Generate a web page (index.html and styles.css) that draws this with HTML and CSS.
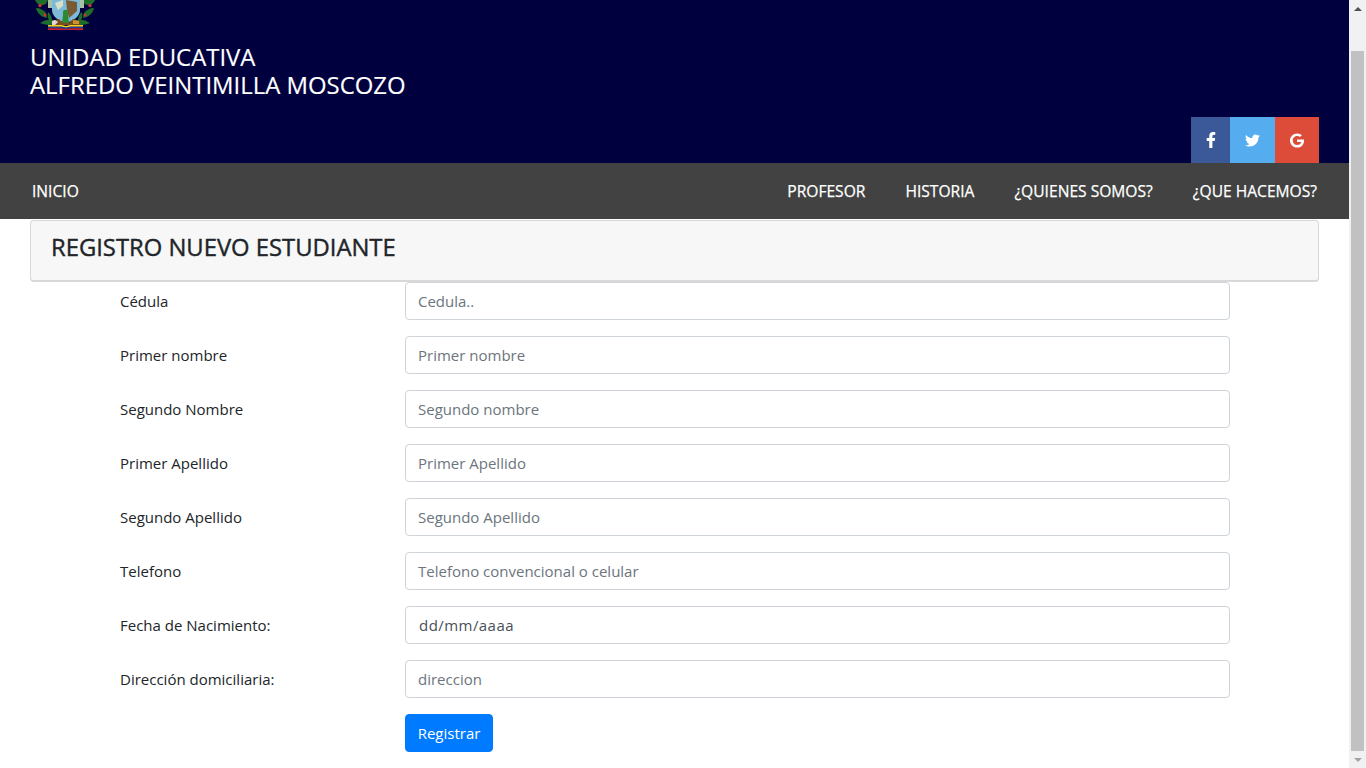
FILE: index.html
```html
<!DOCTYPE html>
<html lang="es">
<head>
<meta charset="utf-8">
<title>Registro nuevo estudiante</title>
<link rel="stylesheet" href="styles.css">
</head>
<body>
<div class="page">
  <header class="top">
    <svg class="emblem" viewBox="0 0 64 30" width="64" height="30" aria-hidden="true">
      <g fill="#1d6e2b">
        <path d="M2 0h13c-1 3-3 5-6 5C6 5 3 3 2 0z"/>
        <path d="M3 8c4 0 8 2 10 5l1 5c-6-1-10-5-11-10z"/>
        <path d="M7 23c4-3 9-4 13-3l3 3c-5 3-11 2-16 0z"/>
        <path d="M15 12c3 2 4 6 4 9l-2 1c-2-3-3-6-2-10z"/>
        <path d="M62 0H49c1 3 3 5 6 5 3 0 6-2 7-5z"/>
        <path d="M61 8c-4 0-8 2-10 5l-1 5c6-1 10-5 11-10z"/>
        <path d="M57 23c-4-3-9-4-13-3l-3 3c5 3 11 2 16 0z"/>
        <path d="M49 12c-3 2-4 6-4 9l2 1c2-3 3-6 2-10z"/>
      </g>
      <g fill="#c9392b">
        <circle cx="7" cy="5.5" r="1.7"/><circle cx="57" cy="5.5" r="1.7"/>
        <circle cx="12" cy="15" r="1.5"/><circle cx="52" cy="15" r="1.5"/>
      </g>
      <rect x="15" y="0" width="4" height="8" fill="#a9c2a4"/>
      <rect x="47" y="0" width="4" height="8" fill="#a9c2a4"/>
      <path d="M19 0h28v10c0 6-6 11-14 13-8-2-14-7-14-13z" fill="#7dbad8"/>
      <path d="M33 0l11 2v9l-8 7-2-8z" fill="#7a5a32"/>
      <path d="M22 3l8-3v6l-5 4z" fill="#d7dfc8"/>
      <path d="M30 12c0-3 5-3 5 0v3l1 8h-7l1-8z" fill="#2c8a32"/>
      <path d="M19 21l7-2 4 4h6l4-4 7 2v4H19z" fill="#7c4c1c"/>
      <path d="M19 21l3-1 3 2-3 3h-3z" fill="#e3d3da"/>
      <path d="M40 20l6 1v3h-6z" fill="#c7962c"/>
      <path d="M15 25h14l4 1 4-1h13v1.7H37l-4 1-4-1H15z" fill="#f2d01e"/>
      <path d="M15 26.7h14l4 1 4-1h13v1.6H37l-4 1-4-1H15z" fill="#203f9c"/>
      <path d="M15 28.3h14l4 1 4-1h13V30H15z" fill="#c8202f"/>
    </svg>
    <h1 class="brand">UNIDAD EDUCATIVA<br>ALFREDO VEINTIMILLA MOSCOZO</h1>
    <div class="social">
      <a class="soc soc-fb"><svg viewBox="0 0 320 512" width="10" height="16"><path d="M279.14 288l14.22-92.66h-88.91v-60.13c0-25.35 12.42-50.06 52.24-50.06h40.42V6.26S260.43 0 225.36 0c-73.22 0-121.08 44.38-121.08 124.72v70.62H22.89V288h81.39v224h100.17V288z"/></svg></a>
      <a class="soc soc-tw"><svg viewBox="0 0 512 512" width="15" height="15"><path d="M459.37 151.716c.325 4.548.325 9.097.325 13.645 0 138.72-105.583 298.558-298.558 298.558-59.452 0-114.68-17.219-161.137-47.106 8.447.974 16.568 1.299 25.34 1.299 49.055 0 94.213-16.568 130.274-44.832-46.132-.975-84.792-31.188-98.112-72.772 6.498.974 12.995 1.624 19.818 1.624 9.421 0 18.843-1.3 27.614-3.573-48.081-9.747-84.143-51.98-84.143-102.985v-1.299c13.969 7.797 30.214 12.67 47.431 13.319-28.264-18.843-46.781-51.005-46.781-87.391 0-19.492 5.197-37.36 14.294-52.954 51.655 63.675 129.3 105.258 216.365 109.807-1.624-7.797-2.599-15.918-2.599-24.04 0-57.828 46.782-104.934 104.934-104.934 30.213 0 57.502 12.67 76.67 33.137 23.715-4.548 46.456-13.32 66.599-25.34-7.798 24.366-24.366 44.833-46.132 57.827 21.117-2.273 41.584-8.122 60.426-16.243-14.292 20.791-32.161 39.308-52.628 54.253z"/></svg></a>
      <a class="soc soc-g"><svg viewBox="0 0 488 512" width="14" height="15"><path d="M488 261.8C488 403.3 391.1 504 248 504 110.8 504 0 393.2 0 256S110.8 8 248 8c66.8 0 123 24.5 166.3 64.9l-67.5 64.9C258.5 52.6 94.3 116.6 94.3 256c0 86.5 69.1 156.6 153.7 156.6 98.2 0 135-70.4 140.8-106.9H248v-85.3h236.1c2.3 12.7 3.9 24.9 3.9 41.4z"/></svg></a>
    </div>
  </header>
  <nav class="menu">
    <a class="menu-link">INICIO</a>
    <div class="menu-right">
      <a class="menu-link">PROFESOR</a>
      <a class="menu-link">HISTORIA</a>
      <a class="menu-link">¿QUIENES SOMOS?</a>
      <a class="menu-link">¿QUE HACEMOS?</a>
    </div>
  </nav>
  <main class="content">
    <div class="card-head"><h2 class="card-title">REGISTRO NUEVO ESTUDIANTE</h2></div>
    <form class="form">
      <div class="row"><label class="lbl">Cédula</label><input class="field" placeholder="Cedula.."></div>
      <div class="row"><label class="lbl">Primer nombre</label><input class="field" placeholder="Primer nombre"></div>
      <div class="row"><label class="lbl">Segundo Nombre</label><input class="field" placeholder="Segundo nombre"></div>
      <div class="row"><label class="lbl">Primer Apellido</label><input class="field" placeholder="Primer Apellido"></div>
      <div class="row"><label class="lbl">Segundo Apellido</label><input class="field" placeholder="Segundo Apellido"></div>
      <div class="row"><label class="lbl">Telefono</label><input class="field" placeholder="Telefono convencional o celular"></div>
      <div class="row"><label class="lbl">Fecha de Nacimiento:</label><input class="field field-date" value="dd/mm/aaaa"></div>
      <div class="row"><label class="lbl">Dirección domiciliaria:</label><input class="field" placeholder="direccion"></div>
      <div class="row"><span class="lbl"></span><button class="btn" type="button">Registrar</button></div>
    </form>
  </main>
</div>
<div class="scrollbar" aria-hidden="true">
  <div class="arrow arrow-up"></div>
  <div class="thumb"></div>
  <div class="arrow arrow-down"></div>
</div>
</body>
</html>
```
FILE: styles.css
```css
* { box-sizing: border-box; }
html, body { margin: 0; height: 768px; overflow: hidden; }
body {
  display: flex;
  background: #fff;
  font-family: "Open Sans", "Noto Sans", sans-serif;
  font-size: 15px;
  color: #212529;
}
.page { width: 1349px; flex: none; }
.top {
  height: 163px;
  background: #00003f;
  padding: 0 30px;
  display: flex;
  flex-direction: column;
}
.emblem { display: block; margin-left: 3px; flex: none; }
.brand {
  margin: 13px 0 0;
  font-size: 23.9px;
  line-height: 28px;
  font-weight: 400;
  -webkit-text-stroke: 0.15px #fff;
  color: #fff;
}
.social { display: flex; margin-top: auto; align-self: flex-end; }
.soc { height: 46px; display: flex; align-items: center; justify-content: center; fill: #fff; }
.soc-fb { width: 39px; background: #3b5998; }
.soc-tw { width: 45px; background: #55acee; }
.soc-g { width: 44px; background: #dd4b39; }
.menu {
  height: 56px;
  background: #414241;
  padding: 0 32px;
  display: flex;
  justify-content: space-between;
  align-items: center;
}
.menu-right { display: flex; gap: 40px; }
.menu-link { color: #fff; font-size: 15.6px; font-weight: 400; line-height: 24px; -webkit-text-stroke: 0.25px #fff; }
.content { padding: 1px 30px 0; }
.card-head {
  height: 62px;
  background: #f7f7f7;
  border: 1px solid rgba(0,0,0,.125);
  border-bottom-width: 2px;
  border-radius: 4px;
  padding: 0 20px 7px;
  display: flex;
  align-items: center;
}
.card-title { margin: 0; font-size: 23.8px; font-weight: 400; line-height: 29px; color: #212529; -webkit-text-stroke: 0.4px #212529; }
.form { display: flex; flex-direction: column; gap: 16px; padding: 0 89px 0 90px; margin-top: -0.5px; }
.row { display: flex; align-items: center; height: 38px; }
.lbl { width: 285px; flex: none; line-height: 24px; }
.field {
  flex: 1;
  height: 38px;
  border: 1px solid #ced4da;
  border-radius: 4px;
  padding: 6px 12px;
  font: inherit;
  color: #495057;
  background: #fff;
  outline: 0;
  min-width: 0;
}
.field::placeholder { color: #6c757d; opacity: 1; }
.field-date { padding-left: 13px; letter-spacing: 0.45px; }
.btn {
  width: 88px;
  height: 38px;
  border: 1px solid #007bff;
  border-radius: 4px;
  background: #007bff;
  color: #fff;
  font: inherit;
  padding: 0;
}
.scrollbar {
  width: 17px;
  height: 768px;
  flex: none;
  background: #f1f1f1;
  display: flex;
  flex-direction: column;
  align-items: center;
}
.thumb { width: 13px; height: 700px; background: #c1c1c1; flex: none; }
.arrow { height: 17px; flex: none; display: flex; align-items: center; justify-content: center; }
.arrow-up { margin-bottom: 34px; }
.arrow::before { content: ""; width: 0; height: 0; border-left: 4px solid transparent; border-right: 4px solid transparent; }
.arrow-up::before { border-bottom: 4px solid #505050; }
.arrow-down::before { border-top: 4px solid #a3a3a3; }
```
